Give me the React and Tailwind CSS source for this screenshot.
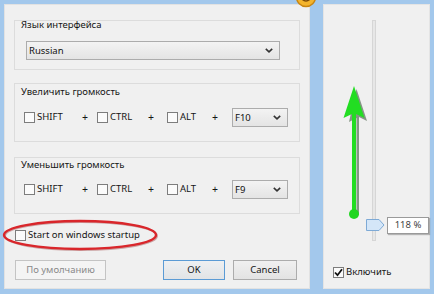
import React from "react";

const font = { fontFamily: '"Noto Sans", "Open Sans", sans-serif' };

function Check({ checked = false }) {
  return (
    <span className="w-[11px] h-[11px] border border-[#7d7d7d] bg-[#fbfbfb] flex items-center justify-center shrink-0">
      {checked && (
        <svg width="9" height="9" viewBox="0 0 9 9">
          <path d="M1 4.5 L3.5 7.2 L8 1.3" fill="none" stroke="#111" strokeWidth="1.8" />
        </svg>
      )}
    </span>
  );
}

function Select({ value, className }) {
  return (
    <div
      className={
        "h-[19px] border border-[#acacac] bg-gradient-to-b from-[#f3f3f3] to-[#e4e4e4] flex items-center justify-between pl-[2px] pr-[6px] " +
        className
      }
    >
      <span className="leading-none text-[#111]">{value}</span>
      <svg width="8" height="5" viewBox="0 0 8 5">
        <path d="M0.8 0.8 L4 3.8 L7.2 0.8" fill="none" stroke="#333" strokeWidth="1.6" />
      </svg>
    </div>
  );
}

function HotkeyRow({ fkey }) {
  return (
    <div className="flex items-center">
      <div className="w-[58px] flex items-center gap-[2px]">
        <Check />
        <span>SHIFT</span>
      </div>
      <span className="w-[15px] text-[10.5px]">+</span>
      <div className="w-[51px] flex items-center gap-[2px]">
        <Check />
        <span>CTRL</span>
      </div>
      <span className="w-[19px] text-[10.5px]">+</span>
      <div className="w-[45px] flex items-center gap-[2px]">
        <Check />
        <span>ALT</span>
      </div>
      <span className="w-[20px] text-[10.5px]">+</span>
      <Select value={fkey} className="w-[56px]" />
    </div>
  );
}

export default function App() {
  return (
    <div
      className="w-[434px] h-[294px] bg-[#a3c8ec] relative overflow-hidden flex pt-[4px] pl-[4px] pr-[4px] pb-[5px] gap-[13px] text-[9.5px] text-[#151515]"
      style={font}
    >
      {/* left panel */}
      <div className="w-[306px] bg-[#f0f0f0] border border-[#e2e2e2] flex flex-col px-[9px] pt-[15px]">
        <div className="h-[50px] border border-[#dcdcdc] flex flex-col">
          <div className="-mt-[3px] ml-[6px] leading-[14px]">Язык интерфейса</div>
          <Select value="Russian" className="mt-[9px] ml-[11px] w-[254px] h-[18px]" />
        </div>

        <div className="mt-[13px] h-[59px] border border-[#dcdcdc] flex flex-col">
          <div className="mt-[1px] ml-[6px] leading-[14px]">Увеличить громкость</div>
          <div className="mt-[9px] ml-[9px]">
            <HotkeyRow fkey="F10" />
          </div>
        </div>

        <div className="mt-[15px] h-[57px] border border-[#dcdcdc] flex flex-col">
          <div className="mt-[0px] ml-[6px] leading-[14px]">Уменьшить громкость</div>
          <div className="mt-[8px] ml-[9px]">
            <HotkeyRow fkey="F9" />
          </div>
        </div>

        <div className="mt-[14px] h-[14px] ml-[1px] flex items-center gap-[2px]">
          <Check />
          <span>Start on windows startup</span>
        </div>

        <div className="mt-[18px] flex items-center">
          <div className="ml-[1px] w-[91px] h-[20px] border border-[#c4c4c4] bg-[#f4f4f4] text-[#8a8a8a] flex items-center justify-center">
            По умолчанию
          </div>
          <div className="ml-auto w-[62px] h-[20px] border border-[#5b9bd5] bg-gradient-to-b from-[#eef0f2] to-[#e2e4e6] flex items-center justify-center">
            OK
          </div>
          <div className="ml-[8px] mr-[3px] w-[64px] h-[20px] border border-[#acacac] bg-gradient-to-b from-[#f0f0f0] to-[#e3e3e3] flex items-center justify-center">
            Cancel
          </div>
        </div>
      </div>

      {/* right panel */}
      <div className="flex-1 bg-[#f0f0f0] border border-[#e4e4e4] relative flex flex-col">
        <div className="relative h-[250px]">
          {/* track */}
          <div className="absolute left-[48px] top-[15px] w-[4px] h-[221px] border border-[#d6d6d6] bg-[#e7e7e7]" />
          {/* arrow */}
          <svg className="absolute left-[14px] top-[78px]" width="36" height="140" viewBox="0 0 36 140">
            <path d="M18.5 6 L29 38 L21 34 L21 132 L18.5 132 L18.5 35 L11 39 Z" fill="#2e4a2e" opacity="0.55" />
            <path d="M16 3 L26.5 35 L18 31 L18 130 L14 130 L14 31 L5.5 35 Z" fill="#22dd22" />
            <circle cx="16" cy="131" r="5" fill="#1fd61f" />
          </svg>
          {/* thumb */}
          <svg className="absolute left-[42px] top-[214px]" width="19" height="12" viewBox="0 0 19 12">
            <path d="M0.5 0.5 L13 0.5 L18 6 L13 11.5 L0.5 11.5 Z" fill="#d4e6f8" stroke="#7eaad6" />
          </svg>
          {/* value tip */}
          <div className="absolute left-[63px] top-[212px] w-[42px] h-[17px] bg-white border border-[#9a9a9a] shadow-[1px_1px_1px_rgba(0,0,0,0.25)] flex items-center justify-center text-[#444]">
            118 %
          </div>
        </div>
        <div className="mt-[10px] ml-[9px] flex items-center gap-[2px]">
          <Check checked />
          <span>Включить</span>
        </div>
      </div>

      {/* orange badge */}
      <svg className="absolute left-[295px] top-[-14px]" width="22" height="22" viewBox="0 0 22 22">
        <circle cx="11" cy="11" r="9.5" fill="#f4b42c" stroke="#c98510" strokeWidth="1.5" />
        <path d="M6 12 Q11 18 16 12" fill="none" stroke="#7a4a08" strokeWidth="1.5" />
      </svg>

      {/* red annotation ellipse */}
      <svg className="absolute left-[1px] top-[218px]" width="160" height="34" viewBox="0 0 160 34">
        <ellipse cx="79" cy="17" rx="76" ry="14" fill="none" stroke="#8a1a1a" strokeWidth="2" opacity="0.35" transform="translate(1 1)" />
        <ellipse cx="79" cy="17" rx="76" ry="14" fill="none" stroke="#d9262b" strokeWidth="2.4" />
      </svg>
    </div>
  );
}
